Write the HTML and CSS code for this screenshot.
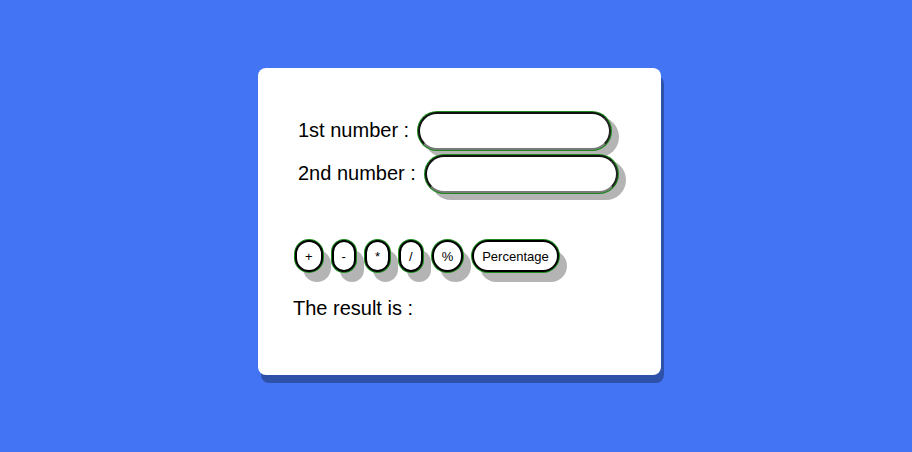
FILE: index.html
```html
<!DOCTYPE html>
<html>
<head>
<meta charset="utf-8">
<link rel="stylesheet" href="styles.css">
</head>
<body>
<div class="card">
  <div class="row row1">
    <label class="label" for="n1">1st number :</label>
    <input class="field" id="n1" type="text">
  </div>
  <div class="row row2">
    <label class="label" for="n2">2nd number :</label>
    <input class="field" id="n2" type="text">
  </div>
  <div class="buttons">
    <button class="btn">+</button>
    <button class="btn">-</button>
    <button class="btn">*</button>
    <button class="btn">/</button>
    <button class="btn">%</button>
    <button class="btn">Percentage</button>
  </div>
  <div class="result">The result is :</div>
</div>
</body>
</html>
```

FILE: styles.css
```css
html, body {
  margin: 0;
  height: 100%;
}
body {
  background: #4374f4;
  font-family: "Liberation Sans", Arial, sans-serif;
  padding: 68px 0 0 258px;
  box-sizing: border-box;
}
.card {
  width: 403px;
  height: 307px;
  box-sizing: border-box;
  background: #fff;
  border-radius: 8px;
  box-shadow: 3px 8px 0 rgba(0, 0, 0, 0.3);
  padding: 44px 0 0 0;
}
.row {
  display: flex;
  align-items: center;
  gap: 9px;
  padding-left: 40px;
}
.row2 {
  margin-top: 5px;
}
.label {
  font-size: 20px;
  color: #000;
  line-height: 22px;
  position: relative;
  top: -1px;
}
.field {
  width: 193px;
  height: 38px;
  box-sizing: border-box;
  border: 2px solid;
  border-color: #111 #222 #7a7a7a #111;
  border-radius: 19px;
  background: #fff;
  box-shadow: 0 0 0 1px #1e8a1e, 7px 6px 0 1px #b4b4b4;
  outline: none;
  padding: 0 12px;
}
.buttons {
  display: flex;
  gap: 9px;
  margin-top: 47px;
  padding-left: 37px;
}
.btn {
  height: 32px;
  box-sizing: border-box;
  padding: 0 8px;
  border: 2px solid #000;
  border-radius: 16px;
  background: #fff;
  color: #000;
  font-family: "Liberation Sans", Arial, sans-serif;
  font-size: 13px;
  box-shadow: 0 0 0 1px #1e8a1e, 8px 10px 0 0 #b4b4b4;
}
.result {
  margin-top: 25px;
  padding-left: 35px;
  font-size: 20px;
  line-height: 22px;
  color: #000;
}
```
